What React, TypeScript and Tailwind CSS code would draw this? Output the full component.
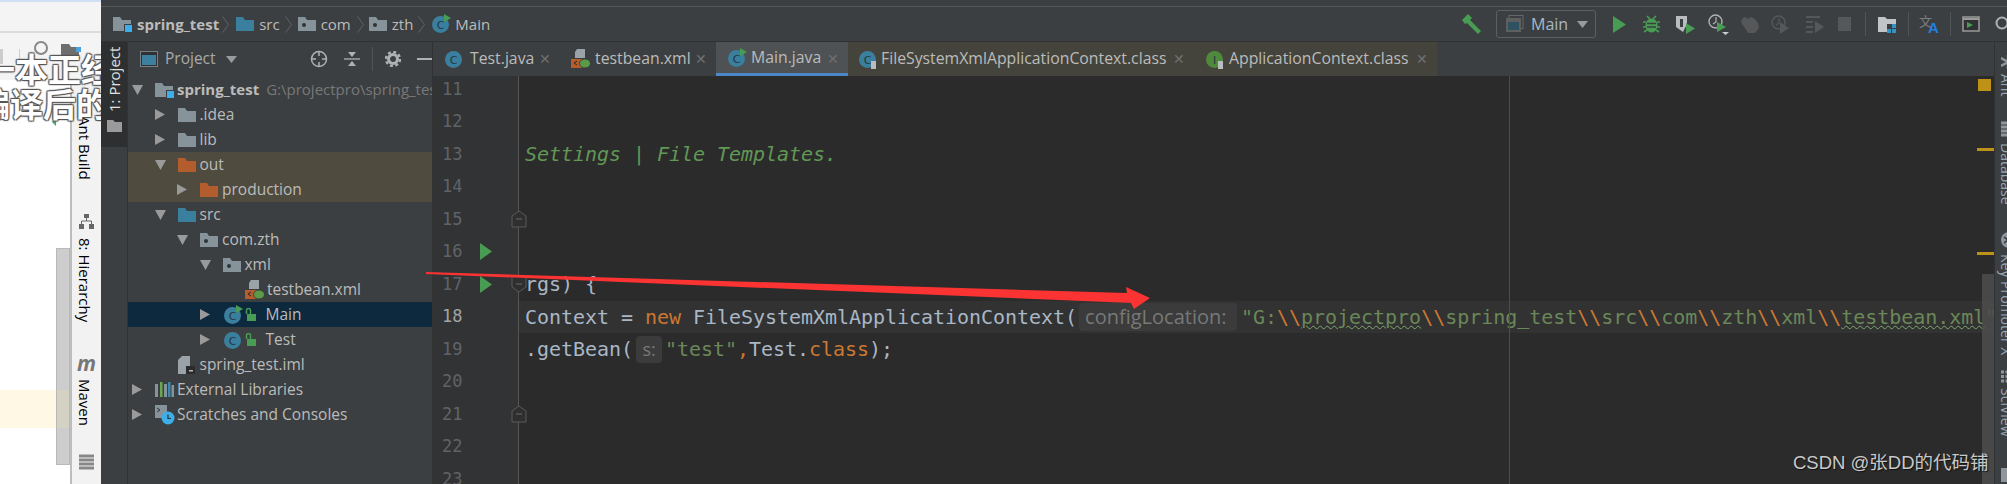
const uiFont = "font-['Open_Sans','Noto_Sans',sans-serif]";

const Folder = ({ c = '#87939a', dot = false, square = false }: { c?: string; dot?: boolean; square?: boolean }) => (
  <svg width="19" height="16" viewBox="0 0 19 16" className="shrink-0">
    <path d="M0 1h7l2 3h9v11H0z" fill={c} />
    {dot && <circle cx="6" cy="9" r="2" fill="#2f3436" />}
    {square && (
      <>
        <rect x="11" y="8" width="8" height="8" fill="#3c3f41" />
        <rect x="12" y="9" width="7" height="7" fill="#3daee9" />
      </>
    )}
  </svg>
);

const ClassIcon = ({ run = false, lock = false, letter = 'C', c = '#3b7f9e' }: { run?: boolean; lock?: boolean; letter?: string; c?: string }) => (
  <svg width="20" height="20" viewBox="0 0 20 20" className="shrink-0">
    <circle cx="9.5" cy="10.5" r="8.5" fill={c} />
    <text x="9.5" y="14.5" fontSize="11" textAnchor="middle" fill="#23363f" fontFamily="DejaVu Sans">{letter}</text>
    {run && <polygon points="13,0 20,4 13,8" fill="#499c54" />}
    {lock && <rect x="13" y="12" width="5" height="8" fill="#b9bdbf" />}
  </svg>
);

const OpenLock = () => (
  <svg width="11" height="14" viewBox="0 0 11 14" className="shrink-0">
    <path d="M1.5 6V2.5a2 2 0 0 1 4 0V6" fill="none" stroke="#499c54" strokeWidth="1.5" />
    <rect x="2" y="6" width="9" height="7" fill="#499c54" />
  </svg>
);

const XmlIcon = () => (
  <svg width="20" height="20" viewBox="0 0 20 20" className="shrink-0">
    <path d="M6 0h8v9H4V3z" fill="#9aa3a8" />
    <rect x="0" y="10" width="16" height="9" fill="#b85c2c" />
    <path d="M3 14l3-2M3 14l3 2" stroke="#2b2b2b" strokeWidth="1" />
    <ellipse cx="14" cy="14.5" rx="5.5" ry="4.5" fill="#5b9a48" stroke="#2f3436" strokeWidth="0.8" />
  </svg>
);

const ImlIcon = () => (
  <svg width="17" height="18" viewBox="0 0 17 18" className="shrink-0">
    <path d="M4 0h8v18H0V4z" fill="#9aa3a8" />
    <rect x="8" y="10" width="9" height="8" fill="#2b2b2b" />
    <rect x="11" y="14" width="4" height="1.5" fill="#bbb" />
  </svg>
);

const LibIcon = () => (
  <svg width="19" height="15" viewBox="0 0 19 15" className="shrink-0">
    <rect x="0" y="2" width="3" height="13" fill="#87939a" />
    <rect x="5" y="0" width="2.5" height="15" fill="#6aa84f" />
    <rect x="9" y="2" width="3" height="13" fill="#87939a" />
    <rect x="13" y="0" width="2.5" height="15" fill="#3d87a8" />
    <rect x="16.5" y="3" width="2.5" height="12" fill="#87939a" />
  </svg>
);

const ScratchIcon = () => (
  <svg width="20" height="20" viewBox="0 0 20 20" className="shrink-0">
    <rect x="0" y="0" width="12" height="13" fill="#87939a" />
    <path d="M2 3l3 2-3 2" fill="none" stroke="#2f3436" strokeWidth="1" />
    <circle cx="13" cy="13" r="6.5" fill="#3daee9" />
    <path d="M13 9.5V13.5h3" fill="none" stroke="#2f3436" strokeWidth="1.2" />
  </svg>
);

const Chevron = () => (
  <svg width="7" height="17" viewBox="0 0 7 17" className="shrink-0">
    <path d="M0.5 0.5l6 8-6 8" fill="none" stroke="#5f6466" strokeWidth="1" />
  </svg>
);

const Caret = ({ open }: { open: boolean }) =>
  open ? (
    <svg width="11" height="10" viewBox="0 0 11 10"><polygon points="0,0 11,0 5.5,10" fill="#9a9a9a" /></svg>
  ) : (
    <svg width="10" height="11" viewBox="0 0 10 11"><polygon points="0,0 10,5.5 0,11" fill="#9a9a9a" /></svg>
  );

type Row = { depth: number; open?: boolean; icon: React.ReactNode; text: React.ReactNode; bg?: string };

const rows: Row[] = [
  {
    depth: 0,
    open: true,
    icon: <Folder square />,
    text: (
      <>
        <span className="text-[15px] font-bold">spring_test</span>
        <span className="ml-[7px] text-[15px] text-[#787878]">G:\projectpro\spring_test</span>
      </>
    ),
  },
  { depth: 1, open: false, icon: <Folder />, text: '.idea' },
  { depth: 1, open: false, icon: <Folder />, text: 'lib' },
  { depth: 1, open: true, icon: <Folder c="#b35c2e" />, text: 'out', bg: 'bg-[#4f4b3f]' },
  { depth: 2, open: false, icon: <Folder c="#b35c2e" />, text: 'production', bg: 'bg-[#4f4b3f]' },
  { depth: 1, open: true, icon: <Folder c="#3b7f9e" />, text: 'src' },
  { depth: 2, open: true, icon: <Folder dot />, text: 'com.zth' },
  { depth: 3, open: true, icon: <Folder dot />, text: 'xml' },
  { depth: 4, icon: <XmlIcon />, text: 'testbean.xml' },
  {
    depth: 3,
    open: false,
    icon: <ClassIcon run />,
    text: (
      <span className="flex items-center gap-[10px]">
        <OpenLock />
        Main
      </span>
    ),
    bg: 'bg-[#0d293e]',
  },
  {
    depth: 3,
    open: false,
    icon: <ClassIcon />,
    text: (
      <span className="flex items-center gap-[10px]">
        <OpenLock />
        Test
      </span>
    ),
  },
  { depth: 1, icon: <ImlIcon />, text: 'spring_test.iml' },
  { depth: 0, open: false, icon: <LibIcon />, text: 'External Libraries' },
  { depth: 0, open: false, icon: <ScratchIcon />, text: 'Scratches and Consoles' },
];

const TreeRow = ({ row }: { row: Row }) => (
  <div
    className={`flex h-[25px] items-center whitespace-nowrap ${row.bg ?? ''}`}
    style={{ paddingLeft: 4 + row.depth * 22.5 }}
  >
    <span className="flex w-[23px] shrink-0 items-center">
      {row.open !== undefined && <Caret open={row.open} />}
    </span>
    <span className="flex w-[22px] shrink-0 items-center">{row.icon}</span>
    {row.text}
  </div>
);

const Tab = ({ icon, text, w, pl, gap, bg, active }: { icon: React.ReactNode; text: string; w: string; pl: string; gap: string; bg?: string; active?: boolean }) => (
  <div className={`relative flex h-full shrink-0 items-center ${w} ${pl} ${bg ?? ''} ${active ? 'border-b-[3px] border-[#4a88c7]' : ''}`}>
    {icon}
    <span className={`${gap} whitespace-nowrap text-[15.8px] text-[#bbbbbb]`}>{text}</span>
    <span className="absolute right-[9px] top-[10px] text-[14px] leading-none text-[#6e7072]">✕</span>
  </div>
);

const Fold = ({ dir }: { dir: 'up' | 'down' }) => (
  <svg width="16" height="20" viewBox="0 0 16 20" className="absolute left-[78px] top-[6px]">
    <path
      d={dir === 'up' ? 'M1 18V7l7-5 7 5v11z' : 'M1 2v11l7 5 7-5V2z'}
      fill="#2f2f2f"
      stroke="#5a5a5a"
      strokeWidth="1"
    />
    <path d="M5 10h6" stroke="#6b6b6b" strokeWidth="1" />
  </svg>
);

const RunMark = () => (
  <svg width="12" height="17" viewBox="0 0 12 17" className="shrink-0">
    <polygon points="0,0 12,8.5 0,17" fill="#499c54" />
  </svg>
);

const Esc = () => <span className="text-[#cc7832]">{'\\\\'}</span>;

const Line = ({ n, run, fold, current, children }: { n: number; run?: boolean; fold?: 'up' | 'down'; current?: boolean; children?: React.ReactNode }) => (
  <div className={`relative flex h-[32.5px] shrink-0 items-center ${current ? 'bg-[#323232]' : ''}`}>
    <div className="flex h-full w-[85px] shrink-0 items-center bg-[#313335] pl-[9px]">
      <span className={`w-[38px] shrink-0 text-[17px] ${current ? 'text-[#a4a3a3]' : 'text-[#606366]'}`}>{n}</span>
      {run && <RunMark />}
    </div>
    <div className="h-full w-px shrink-0 bg-[#555555]" />
    {fold && <Fold dir={fold} />}
    <div className="flex items-center whitespace-pre pl-[6px] tracking-[-0.04px]">{children}</div>
  </div>
);

const Sep = () => <div className="h-[24px] w-px shrink-0 bg-[#515456]" />;

const ToolBar = () => (
  <div className="ml-auto flex h-full items-center">
    <svg width="20" height="20" viewBox="0 0 20 20" className="shrink-0">
      <path d="M0 6l6-6 4 4-2 2 11 11-3 3L5 9l-2 1z" fill="#499c54" />
    </svg>
    <div className={`ml-[14px] flex h-[28px] w-[100px] shrink-0 items-center rounded-[3px] border border-[#5e6060] pl-[9px] ${uiFont}`}>
      <svg width="18" height="18" viewBox="0 0 18 18" className="shrink-0">
        <rect x="3" y="0.5" width="14" height="13" fill="none" stroke="#666" />
        <rect x="0" y="3" width="15" height="14" fill="#5e6060" />
        <rect x="2" y="7" width="11" height="8" fill="#2f5261" />
      </svg>
      <span className="ml-[7px] text-[16px] text-[#a9b7c6]">Main</span>
      <svg width="11" height="7" viewBox="0 0 11 7" className="ml-[9px]"><polygon points="0,0 11,0 5.5,7" fill="#9a9a9a" /></svg>
    </div>
    <svg width="13" height="17" viewBox="0 0 13 17" className="ml-[17px] shrink-0"><polygon points="0,0 13,8.5 0,17" fill="#499c54" /></svg>
    <svg width="17" height="18" viewBox="0 0 17 18" className="ml-[17px] shrink-0">
      <ellipse cx="8.5" cy="10.5" rx="6" ry="7" fill="#499c54" />
      <path d="M4 1l3 3M13 1l-3 3M0 7h3M14 7h3M0 12h3M14 12h3M1 17l3-2M16 17l-3-2" stroke="#499c54" strokeWidth="1.6" />
      <path d="M4 8.5h9M4 12h9" stroke="#3c3f41" strokeWidth="1.5" />
    </svg>
    <svg width="20" height="19" viewBox="0 0 20 19" className="ml-[15px] shrink-0">
      <path d="M1 1h11v8l-4 8-7-5z" fill="#b9bdbf" />
      <path d="M5 4h3v8H5z" fill="#3c3f41" />
      <polygon points="11,8 20,13.5 11,19" fill="#499c54" />
    </svg>
    <svg width="21" height="21" viewBox="0 0 21 21" className="ml-[13px] shrink-0">
      <circle cx="7.5" cy="7.5" r="6.5" fill="none" stroke="#afb1b3" strokeWidth="1.4" />
      <path d="M8 3v5l-3 2" fill="none" stroke="#afb1b3" strokeWidth="1.2" />
      <polygon points="9,8 18,13 9,18" fill="#499c54" />
      <polygon points="14,18 21,18 17.5,21" fill="#cccccc" />
    </svg>
    <svg width="20" height="19" viewBox="0 0 20 19" className="ml-[11px] shrink-0">
      <path d="M3 3l2-1 3 2 3-2 4 2 3 4 1 5-4 5-7 0-3-5-3-4-1-3z" fill="#555759" />
    </svg>
    <svg width="19" height="19" viewBox="0 0 19 19" className="ml-[11px] shrink-0">
      <circle cx="7.5" cy="7.5" r="6.5" fill="none" stroke="#555759" strokeWidth="1.4" />
      <path d="M8 3v5l-3 2" fill="none" stroke="#555759" strokeWidth="1.2" />
      <polygon points="9,7 18,13 9,19" fill="#555759" />
    </svg>
    <svg width="18" height="17" viewBox="0 0 18 17" className="ml-[16px] shrink-0">
      <path d="M0 1h14M0 6h7M0 11h7M0 16h7" stroke="#555759" strokeWidth="2" />
      <polygon points="9,5 18,11 9,17" fill="#555759" />
    </svg>
    <div className="ml-[14px] h-[14px] w-[13px] shrink-0 bg-[#555759]" />
    <div className="ml-[14px]"><Sep /></div>
    <svg width="19" height="17" viewBox="0 0 19 17" className="ml-[12px] shrink-0">
      <path d="M0 1h7l2 2h9v13H0z" fill="#c2c5c7" />
      <rect x="9" y="8" width="10" height="9" fill="#3c3f41" />
      <rect x="14" y="8" width="4" height="4" fill="#3592c4" />
      <rect x="9" y="13" width="4" height="4" fill="#3592c4" />
      <rect x="14" y="13" width="4" height="4" fill="#3592c4" />
    </svg>
    <div className="ml-[11px]"><Sep /></div>
    <svg width="21" height="20" viewBox="0 0 21 20" className="ml-[10px] shrink-0">
      <text x="0" y="12" fontSize="13" fill="#7a7d80" fontFamily="Noto Sans CJK SC">文</text>
      <text x="9" y="19" fontSize="15" fontWeight="700" fill="#1f80e0" fontFamily="Liberation Sans">A</text>
    </svg>
    <div className="ml-[10px]"><Sep /></div>
    <svg width="18" height="16" viewBox="0 0 18 16" className="ml-[11px] shrink-0">
      <rect x="1" y="1" width="16" height="14" fill="#2f3132" stroke="#9a9a9a" strokeWidth="1.5" />
      <path d="M1 3h16" stroke="#9a9a9a" strokeWidth="2" />
      <polygon points="5,6 11,9 5,12" fill="#499c54" />
    </svg>
    <svg width="17" height="17" viewBox="0 0 17 17" className="ml-[15px] mr-[-5px] shrink-0">
      <circle cx="7" cy="7" r="5.5" fill="none" stroke="#afb1b3" strokeWidth="2" />
    </svg>
  </div>
);

const RightLabel = ({ mt, label, h }: { mt: string; label: string; h: string }) => (
  <span className={`${mt} ${h} w-[18px] shrink-0 self-start [writing-mode:vertical-rl] whitespace-nowrap text-[14px] leading-none text-[#9aa7b0]`}>{label}</span>
);

export default function App() {
  return (
    <div className={`relative flex h-[484px] w-[2007px] overflow-hidden text-[15.5px] ${uiFont}`}>
      {/* page behind the IDE */}
      <div className="relative flex w-[101px] shrink-0 flex-col overflow-hidden bg-[#f4f4f4]">
        <div className="h-[2px] bg-[#cfe0f5]" />
        <div className="h-[29px]" />
        <div className="h-[2px] bg-[#dcdcdc]" />
        <div className="flex h-[47px] shrink-0 items-center">
          <div className="h-[15px] w-[3px] bg-[#cccccc]" />
          <div className="ml-[16px] h-[15px] w-px bg-[#cccccc]" />
          <svg width="17" height="20" viewBox="0 0 17 20" className="ml-[12px] mb-[14px]">
            <circle cx="9" cy="8" r="6" fill="none" stroke="#888" strokeWidth="2" />
          </svg>
          <svg width="20" height="16" viewBox="0 0 20 16" className="ml-[12px] mb-[10px]">
            <path d="M0 0h8l2 3h8v12H0z" fill="#6e6e6e" />
            <rect x="15" y="3" width="5" height="5" fill="#4aa3dd" />
          </svg>
        </div>
        <div className="flex flex-1">
          <div className="flex w-[56px] shrink-0 flex-col bg-white">
            <svg width="14" height="10" viewBox="0 0 14 10" className="ml-[52px] mt-[38px] shrink-0">
              <path d="M1 3l5 5 7-7" fill="none" stroke="#4ca86a" strokeWidth="3" />
            </svg>
            <div className="mt-[262px] h-[38px] bg-[#fff8e5]" />
          </div>
          <div className="w-[14px] shrink-0 bg-white pt-[168px]">
            <div className="flex h-[217px] flex-col border border-[#b9b9b9] bg-[#cdcdcd]">
              <div className="mt-[141px] h-[38px] bg-[#d4d2c2]" />
            </div>
          </div>
          <div className="flex w-[31px] shrink-0 flex-col items-center border-l-2 border-[#bdbdbd] bg-[#f2f2f2] pr-[3px] text-[15px] text-black">
            <span className="mt-[36px] h-[70px] [writing-mode:vertical-rl]">Ant Build</span>
            <svg width="15" height="15" viewBox="0 0 15 15" className="ml-[3px] mt-[28px] shrink-0">
              <rect x="5" y="0" width="5" height="4" fill="#666" />
              <rect x="0" y="10" width="5" height="5" fill="#666" />
              <rect x="10" y="10" width="5" height="5" fill="#666" />
              <path d="M7.5 4v3M2.5 10V7h10v3" fill="none" stroke="#666" strokeWidth="1" />
            </svg>
            <span className="mt-[9px] h-[92px] whitespace-nowrap [writing-mode:vertical-rl]">8: Hierarchy</span>
            <span className="ml-[3px] mt-[23px] text-[21px] font-bold italic leading-none text-[#777777]">m</span>
            <span className="mt-[5px] h-[50px] [writing-mode:vertical-rl]">Maven</span>
            <svg width="15" height="17" viewBox="0 0 15 17" className="ml-[3px] mt-[25px] shrink-0">
              <path d="M0 2h15M0 6h15M0 10h15M0 14h15" stroke="#888" strokeWidth="3" />
            </svg>
          </div>
        </div>
        <div className="absolute left-[-18px] top-[51px] whitespace-nowrap font-['Noto_Sans_CJK_SC',sans-serif] text-[33px] font-bold leading-[35px] text-white [text-shadow:-1px_-1px_1px_#555,1px_-1px_1px_#555,-1px_1px_1px_#555,1px_1px_1px_#555]">
          <div>一本正经</div>
          <div className="-ml-[5px]">编译后的</div>
        </div>
      </div>

      {/* IDE */}
      <div className="flex min-w-0 flex-1 flex-col bg-[#3c3f41] text-[#bbbbbb]">
        <div className="h-[6px] shrink-0" />
        <div className="h-px shrink-0 bg-[#555759]" />
        <div className="flex h-[35px] shrink-0 items-center border-b border-[#323232] pl-[12px] text-[15px]">
          <Folder square />
          <span className="ml-[5px] font-bold">spring_test</span>
          <span className="ml-[3px]"><Chevron /></span>
          <span className="ml-[7px]"><Folder c="#3b7f9e" /></span>
          <span className="ml-[4px]">src</span>
          <span className="ml-[5px]"><Chevron /></span>
          <span className="ml-[6px]"><Folder dot /></span>
          <span className="ml-[4px]">com</span>
          <span className="ml-[6px]"><Chevron /></span>
          <span className="ml-[5px]"><Folder dot /></span>
          <span className="ml-[4px]">zth</span>
          <span className="ml-[5px]"><Chevron /></span>
          <span className="ml-[6px]"><ClassIcon run /></span>
          <span className="ml-[4px]">Main</span>
          <ToolBar />
        </div>

        <div className="flex min-h-0 flex-1">
          <div className="flex w-[27px] shrink-0 flex-col border-r border-[#323232]">
            <div className="flex h-[105px] flex-col items-center bg-[#2d2f30]">
              <span className="mt-[9px] h-[61px] rotate-180 whitespace-nowrap text-[15px] leading-none text-[#e0e0e0] [writing-mode:vertical-rl]">1: Project</span>
              <svg width="15" height="12" viewBox="0 0 15 12" className="mt-[8px] shrink-0"><path d="M0 0h6l2 2h7v10H0z" fill="#9a9a9a" /></svg>
            </div>
          </div>

          {/* project panel */}
          <div className="flex w-[305px] shrink-0 flex-col overflow-hidden border-r border-[#323232]">
            <div className="flex h-[34px] shrink-0 items-center pl-[12px]">
              <svg width="18" height="16" viewBox="0 0 18 16" className="shrink-0">
                <rect x="0.5" y="0.5" width="17" height="15" fill="#2f3132" stroke="#7c7f81" />
                <rect x="2" y="4" width="14" height="10" fill="#3d7f9e" />
              </svg>
              <span className="ml-[7px] text-[#a9a9a9]">Project</span>
              <svg width="11" height="7" viewBox="0 0 11 7" className="ml-[10px]"><polygon points="0,0 11,0 5.5,7" fill="#9a9a9a" /></svg>
              <svg width="18" height="18" viewBox="0 0 18 18" className="ml-[73px] shrink-0">
                <circle cx="9" cy="9" r="7.5" fill="none" stroke="#afb1b3" strokeWidth="1.5" />
                <path d="M9 1v5M9 12v5M1 9h5M12 9h5" stroke="#afb1b3" strokeWidth="1.5" />
              </svg>
              <svg width="16" height="16" viewBox="0 0 16 16" className="ml-[16px] shrink-0">
                <path d="M0 8h16" stroke="#afb1b3" strokeWidth="1.3" />
                <polygon points="4,1 12,1 8,6" fill="#afb1b3" />
                <polygon points="4,15 12,15 8,10" fill="#afb1b3" />
              </svg>
              <div className="ml-[12px] h-[24px] w-px bg-[#515456]" />
              <svg width="16" height="16" viewBox="0 0 16 16" className="ml-[12px] shrink-0">
                <circle cx="8" cy="8" r="4.5" fill="none" stroke="#afb1b3" strokeWidth="3" />
                <circle cx="8" cy="8" r="7" fill="none" stroke="#afb1b3" strokeWidth="2.4" strokeDasharray="3 2.5" />
              </svg>
              <div className="ml-[16px] h-[2px] w-[15px] bg-[#afb1b3]" />
            </div>
            <div className="mt-[1px] flex flex-col">
              {rows.map((row, i) => (
                <TreeRow key={i} row={row} />
              ))}
            </div>
          </div>

          {/* editor */}
          <div className="flex min-w-0 flex-1 flex-col">
            <div className="z-10 flex h-[34px] shrink-0 items-center bg-[#3c3f41]">
              <Tab icon={<ClassIcon />} text="Test.java" w="w-[127px]" pl="pl-[11px]" gap="ml-[6px]" />
              <Tab icon={<XmlIcon />} text="testbean.xml" w="w-[156px]" pl="pl-[11px]" gap="ml-[4px]" />
              <Tab icon={<ClassIcon run />} text="Main.java" w="w-[132px]" pl="pl-[11px]" gap="ml-[4px]" bg="bg-[#4e5254]" active />
              <Tab icon={<ClassIcon lock />} text="FileSystemXmlApplicationContext.class" w="w-[346px]" pl="pl-[10px]" gap="ml-[3px]" bg="bg-[#45443c]" />
              <Tab icon={<ClassIcon lock letter="I" c="#4f8a3c" />} text="ApplicationContext.class" w="w-[243px]" pl="pl-[11px]" gap="ml-[4px]" bg="bg-[#45443c]" />
            </div>
            <div className="relative min-h-0 flex-1 overflow-hidden bg-[#2b2b2b] font-['DejaVu_Sans_Mono',monospace] text-[20px] text-[#a9b7c6]">
              <div className="-mt-[3px] flex flex-col">
                <Line n={11} />
                <Line n={12} />
                <Line n={13}>
                  <span className="italic text-[#629755]">Settings | File Templates.</span>
                </Line>
                <Line n={14} />
                <Line n={15} fold="up" />
                <Line n={16} run />
                <Line n={17} run fold="down">rgs) {'{'}</Line>
                <Line n={18} current>
                  Context = <span className="text-[#cc7832]">new</span> FileSystemXmlApplicationContext(
                  <span className={`ml-[2px] mr-[4px] flex h-[28px] w-[158px] items-center rounded-[4px] bg-[#3b3b3b] pl-[6px] text-[20px] tracking-normal text-[#787878] ${uiFont}`}>
                    configLocation:
                  </span>
                  <span className="text-[#6a8759]">
                    "G:<Esc />
                    <span className="underline decoration-[#7fa86f] decoration-wavy decoration-1">projectpro</span>
                    <Esc />spring_test<Esc />src<Esc />com<Esc />zth<Esc />xml<Esc />
                    <span className="underline decoration-[#7fa86f] decoration-wavy decoration-1">testbean.xml</span>"
                  </span>
                </Line>
                <Line n={19}>
                  .getBean(
                  <span className={`ml-[3px] mr-[3px] flex h-[27px] w-[26px] items-center justify-center rounded-[4px] bg-[#3b3b3b] text-[18px] text-[#787878] ${uiFont}`}>
                    s:
                  </span>
                  <span className="text-[#6a8759]">"test"</span>
                  <span className="text-[#cc7832]">,</span>Test.<span className="text-[#cc7832]">class</span>);
                </Line>
                <Line n={20} />
                <Line n={21} fold="up" />
                <Line n={22} />
                <Line n={23} />
              </div>
              {/* right margin guide, scrollbar and error stripes sit over the text */}
              <div className="absolute bottom-0 left-[1076px] top-0 w-px bg-[#4d4d4d]" />
              <div className="absolute bottom-0 right-0 top-[198px] w-[12px] bg-[#4d4d4d]/85" />
              <div className="absolute right-[3px] top-[3px] h-[12px] w-[13px] bg-[#be9117]" />
              <div className="absolute right-0 top-[72px] h-[3px] w-[17px] bg-[#be9117]" />
              <div className="absolute right-0 top-[176px] h-[3px] w-[17px] bg-[#be9117]" />
            </div>
          </div>

          {/* right tool strip */}
          <div className="flex w-[13px] shrink-0 flex-col overflow-hidden border-l border-[#323232]">
            <svg width="14" height="14" viewBox="0 0 14 14" className="ml-[6px] mt-[13px] shrink-0">
              <path d="M7 0v14M0 3l14 8M0 11l14-8" stroke="#8f979c" strokeWidth="2.4" />
            </svg>
            <RightLabel mt="mt-[5px]" h="h-[25px]" label="Ant" />
            <svg width="14" height="16" viewBox="0 0 14 16" className="ml-[6px] mt-[22px] shrink-0">
              <path d="M0 2h14M0 6h14M0 10h14M0 14h14" stroke="#8f979c" strokeWidth="3" />
            </svg>
            <RightLabel mt="mt-[6px]" h="h-[58px]" label="Database" />
            <svg width="16" height="16" viewBox="0 0 16 16" className="ml-[6px] mt-[31px] shrink-0">
              <circle cx="8" cy="8" r="8" fill="#8f979c" />
              <path d="M3 5l4 3-4 3" fill="none" stroke="#3c3f41" strokeWidth="1.6" />
            </svg>
            <RightLabel mt="mt-[6px]" h="h-[98px]" label="Key Promoter X" />
            <svg width="13" height="13" viewBox="0 0 13 13" className="ml-[6px] mt-[18px] shrink-0">
              <path d="M0 2h13M0 6.5h13M0 11h13" stroke="#8f979c" strokeWidth="3" strokeDasharray="3 1.5" />
            </svg>
            <RightLabel mt="mt-[5px]" h="h-[56px]" label="SciView" />
            <div className="ml-[6px] mt-[24px] h-[14px] w-[14px] shrink-0 bg-[#8f979c]" />
          </div>
        </div>
      </div>

      {/* annotation arrow drawn on top of the screenshot */}
      <svg width="2007" height="484" viewBox="0 0 2007 484" className="pointer-events-none absolute left-0 top-0 z-20">
        <polygon points="426,272 1127,293 1126,287 1150,298 1134,309 1131,303 426,274" fill="#fb3333" />
      </svg>

      <div className="absolute left-[1793px] top-[452px] z-20 whitespace-nowrap font-['Liberation_Sans','Noto_Sans_CJK_SC',sans-serif] text-[18.5px] leading-[22px] text-[#c9c9c9] [text-shadow:1px_1px_1px_#111]">
        CSDN @张DD的代码铺
      </div>
    </div>
  );
}
